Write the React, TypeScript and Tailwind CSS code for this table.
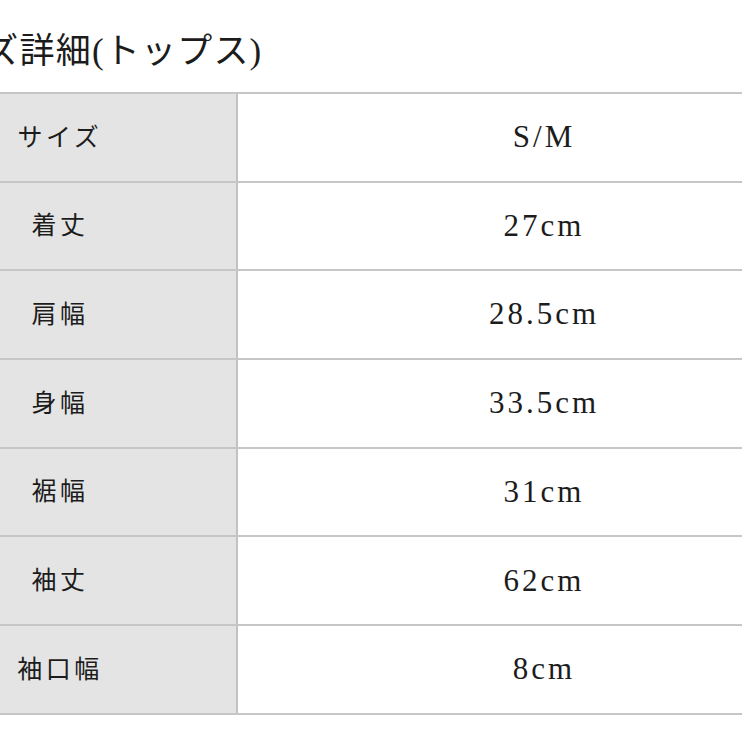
const rows: [string, string][] = [
  ["サイズ", "S/M"],
  ["着丈", "27cm"],
  ["肩幅", "28.5cm"],
  ["身幅", "33.5cm"],
  ["裾幅", "31cm"],
  ["袖丈", "62cm"],
  ["袖口幅", "8cm"],
];

export default function App() {
  return (
    <div
      className="w-[742px] h-[742px] overflow-hidden bg-white text-[#1c1c1c]"
      style={{ fontFamily: '"Liberation Serif", "Noto Sans CJK JP", serif' }}
    >
      <div className="h-[92px] flex items-center pt-[10px] whitespace-nowrap">
        <span className="ml-[-88px] text-[35px] leading-none tracking-[1.2px]">
          サイズ詳細(トップス)
        </span>
      </div>
      <div className="w-[850px] border-t-2 border-[#c6c6c6]">
        {rows.map(([label, value]) => (
          <div key={label} className="flex h-[88.7px] border-b-2 border-[#c6c6c6]">
            <div className="w-[238px] shrink-0 bg-[#e4e4e4] border-r-2 border-[#c2c2c2] flex items-center pl-[16px]">
              <span className="w-[88px] text-center text-[25px] tracking-[3.5px]">
                {label}
              </span>
            </div>
            <div className="flex-1 flex items-center justify-center">
              <span className="text-[31px] tracking-[3px]">{value}</span>
            </div>
          </div>
        ))}
      </div>
    </div>
  );
}
